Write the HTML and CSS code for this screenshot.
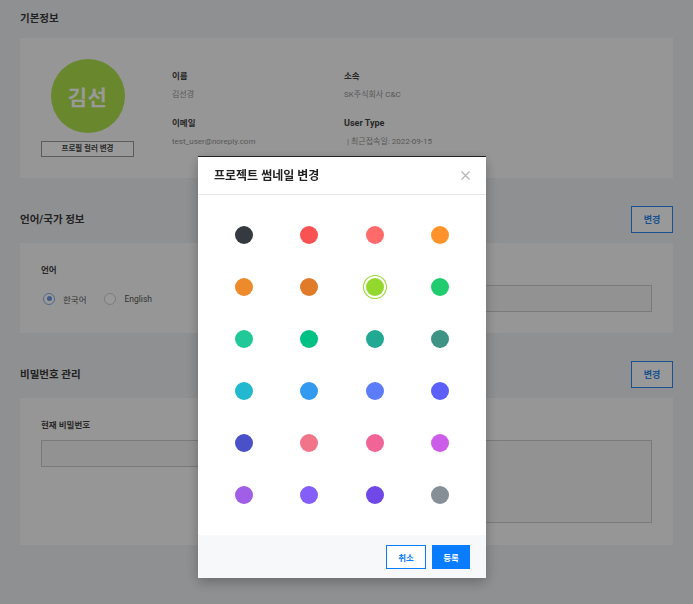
FILE: index.html
```html
<!DOCTYPE html>
<html lang="ko">
<head>
<meta charset="utf-8">
<title>프로필</title>
<link rel="stylesheet" href="styles.css">
</head>
<body>
<main class="page">
  <section class="section">
    <div class="sec-head first">
      <h2 class="sec-title">기본정보</h2>
    </div>
    <div class="card profile">
      <div class="avatar-col">
        <div class="avatar">김선</div>
        <button class="ghost-btn" type="button">프로필 컬러 변경</button>
      </div>
      <dl class="info">
        <div class="info-item">
          <dt class="label">이름</dt>
          <dd class="value">김선경</dd>
        </div>
        <div class="info-item">
          <dt class="label">소속</dt>
          <dd class="value">SK주식회사 C&amp;C</dd>
        </div>
        <div class="info-item">
          <dt class="label">이메일</dt>
          <dd class="value">test_user@noreply.com</dd>
        </div>
        <div class="info-item">
          <dt class="label latin">User Type</dt>
          <dd class="value indent">| 최근접속일: 2022-09-15</dd>
        </div>
      </dl>
    </div>
  </section>

  <section class="section">
    <div class="sec-head">
      <h2 class="sec-title">언어/국가 정보</h2>
      <button class="line-btn" type="button">변경</button>
    </div>
    <div class="card two-col">
      <div class="field">
        <div class="label">언어</div>
        <div class="radios">
          <label class="radio"><span class="radio-mark on"></span>한국어</label>
          <label class="radio"><span class="radio-mark"></span>English</label>
        </div>
      </div>
      <div class="field">
        <div class="label">국가</div>
        <div class="input"></div>
      </div>
    </div>
  </section>

  <section class="section">
    <div class="sec-head">
      <h2 class="sec-title">비밀번호 관리</h2>
      <button class="line-btn" type="button">변경</button>
    </div>
    <div class="card two-col pw">
      <div class="field">
        <div class="label">현재 비밀번호</div>
        <div class="input"></div>
      </div>
      <div class="field">
        <div class="label">새 비밀번호</div>
        <div class="input tall"></div>
      </div>
    </div>
  </section>
</main>

<div class="overlay"></div>

<div class="modal" role="dialog" aria-label="프로젝트 썸네일 변경">
  <div class="modal-head">
    <h3 class="modal-title">프로젝트 썸네일 변경</h3>
    <button class="close" type="button" aria-label="닫기">
      <svg width="9" height="9" viewBox="0 0 9 9"><path d="M0.5 0.5 L8.5 8.5 M8.5 0.5 L0.5 8.5" stroke="#b3b3b3" stroke-width="1.1" fill="none"/></svg>
    </button>
  </div>
  <div class="modal-body">
    <div class="swatches">
      <span class="cell"><span class="dot c1"></span></span>
      <span class="cell"><span class="dot c2"></span></span>
      <span class="cell"><span class="dot c3"></span></span>
      <span class="cell"><span class="dot c4"></span></span>
      <span class="cell"><span class="dot c5"></span></span>
      <span class="cell"><span class="dot c6"></span></span>
      <span class="cell"><span class="dot c7 selected"></span></span>
      <span class="cell"><span class="dot c8"></span></span>
      <span class="cell"><span class="dot c9"></span></span>
      <span class="cell"><span class="dot c10"></span></span>
      <span class="cell"><span class="dot c11"></span></span>
      <span class="cell"><span class="dot c12"></span></span>
      <span class="cell"><span class="dot c13"></span></span>
      <span class="cell"><span class="dot c14"></span></span>
      <span class="cell"><span class="dot c15"></span></span>
      <span class="cell"><span class="dot c16"></span></span>
      <span class="cell"><span class="dot c17"></span></span>
      <span class="cell"><span class="dot c18"></span></span>
      <span class="cell"><span class="dot c19"></span></span>
      <span class="cell"><span class="dot c20"></span></span>
      <span class="cell"><span class="dot c21"></span></span>
      <span class="cell"><span class="dot c22"></span></span>
      <span class="cell"><span class="dot c23"></span></span>
      <span class="cell"><span class="dot c24"></span></span>
    </div>
  </div>
  <div class="modal-foot">
    <button class="btn-outline" type="button">취소</button>
    <button class="btn-primary" type="button">등록</button>
  </div>
</div>
</body>
</html>
```

FILE: styles.css
```css
* { box-sizing: border-box; }

html, body {
  margin: 0;
  padding: 0;
}

body {
  background: #eef0f3;
  font-family: Roboto, "Noto Sans CJK KR", sans-serif;
  color: #444;
  width: 693px;
  height: 604px;
  overflow: hidden;
}

button {
  font-family: inherit;
  cursor: pointer;
  padding: 0;
}

.page {
  padding: 0 20px;
}

/* section headers */
.sec-head {
  display: flex;
  align-items: center;
  justify-content: space-between;
  min-height: 27px;
  padding-top: 28px;
  margin-bottom: 10px;
  box-sizing: content-box;
}

.sec-head.first {
  padding-top: 5px;
  margin-bottom: 6px;
}

.sec-title {
  margin: 0;
  font-size: 10.5px;
  font-weight: 700;
  color: #3a3a3a;
  line-height: 14px;
}

.line-btn {
  width: 42px;
  height: 27px;
  border: 1px solid #2b88f0;
  background: #fff;
  color: #2b88f0;
  font-size: 9px;
  font-weight: 700;
}

/* cards */
.card {
  background: #fbfbfb;
}

.profile {
  display: flex;
  padding: 21px;
  gap: 38px;
}

.avatar-col {
  display: flex;
  flex-direction: column;
  align-items: center;
  gap: 8px;
  width: 93px;
}

.avatar {
  width: 74px;
  height: 74px;
  border-radius: 50%;
  background: #b0e24c;
  color: #fff;
  font-size: 21px;
  font-weight: 700;
  display: flex;
  align-items: center;
  justify-content: center;
  letter-spacing: 0.5px;
}

.ghost-btn {
  width: 93px;
  height: 16px;
  border: 1px solid #9a9a9a;
  background: #fff;
  color: #444;
  font-size: 7.5px;
  font-weight: 700;
  line-height: 14px;
}

.info {
  margin: 10px 0 0;
  display: grid;
  grid-template-columns: 172px 172px;
  row-gap: 14px;
  align-content: start;
}

.info-item {
  display: flex;
  flex-direction: column;
  gap: 5px;
}

.label {
  font-size: 8.5px;
  font-weight: 700;
  color: #444;
  line-height: 14px;
  margin: 0;
}

.label.latin {
  font-size: 9px;
}

.value {
  margin: 0;
  font-size: 8px;
  color: #939393;
  line-height: 14px;
}

.value.indent {
  padding-left: 3px;
}

/* two column form cards */
.two-col {
  display: grid;
  grid-template-columns: 1fr 1fr;
  column-gap: 20px;
  padding: 20px 21px 21px;
}

.two-col.pw {
  padding-bottom: 22px;
}

.field {
  display: flex;
  flex-direction: column;
  gap: 8px;
}

.input {
  height: 27px;
  border: 1px solid #ccc;
  background: #f4f4f4;
}

.input.tall {
  height: 83px;
}

.radios {
  height: 27px;
  display: flex;
  align-items: center;
  gap: 18px;
  padding-left: 2px;
}

.radio {
  display: flex;
  align-items: center;
  gap: 8px;
  font-size: 8.5px;
  color: #555;
}

.radio-mark {
  width: 12px;
  height: 12px;
  border-radius: 50%;
  border: 1px solid #d0d0d0;
  background: #fff;
  display: inline-flex;
  align-items: center;
  justify-content: center;
}

.radio-mark.on {
  border-color: #86aee8;
}

.radio-mark.on::after {
  content: "";
  width: 5px;
  height: 5px;
  border-radius: 50%;
  background: #6a98e0;
}

/* overlay + modal */
.overlay {
  position: fixed;
  inset: 0;
  background: rgba(0, 0, 0, 0.4);
}

.modal {
  position: fixed;
  top: 156px;
  left: 198px;
  width: 288px;
  height: 422px;
  background: #fff;
  border-top: 1px solid #222;
  box-shadow: 0 4px 12px rgba(0, 0, 0, 0.28);
  display: flex;
  flex-direction: column;
}

.modal-head {
  height: 38px;
  display: flex;
  align-items: center;
  justify-content: space-between;
  padding: 0 16px;
  border-bottom: 1px solid #e6e6e6;
  box-sizing: content-box;
}

.modal-title {
  margin: 0;
  font-size: 12px;
  font-weight: 700;
  color: #222;
  line-height: 16px;
}

.close {
  border: 0;
  background: none;
  width: 9px;
  height: 9px;
  display: flex;
}

.modal-body {
  flex: 1;
  padding: 14px 13px;
}

.swatches {
  display: grid;
  grid-template-columns: repeat(4, 1fr);
  grid-auto-rows: 52px;
}

.cell {
  display: flex;
  align-items: center;
  justify-content: center;
}

.dot {
  width: 18px;
  height: 18px;
  border-radius: 50%;
}

.dot.selected {
  box-shadow: 0 0 0 2px #fff, 0 0 0 3px #94d82d;
}

.c1 { background: #343a40; }
.c2 { background: #fa5252; }
.c3 { background: #ff6b6b; }
.c4 { background: #ff922b; }
.c5 { background: #ed8a2b; }
.c6 { background: #e07b2a; }
.c7 { background: #94d82d; }
.c8 { background: #20cc6f; }
.c9 { background: #20c997; }
.c10 { background: #00c084; }
.c11 { background: #22a993; }
.c12 { background: #3d9485; }
.c13 { background: #22b8cf; }
.c14 { background: #339af0; }
.c15 { background: #5c7cfa; }
.c16 { background: #5c60f8; }
.c17 { background: #4a50c8; }
.c18 { background: #f27489; }
.c19 { background: #f06595; }
.c20 { background: #cc5de8; }
.c21 { background: #a05fe6; }
.c22 { background: #845ef7; }
.c23 { background: #7048e8; }
.c24 { background: #868e96; }

.modal-foot {
  height: 44px;
  background: #f7f8fa;
  display: flex;
  align-items: center;
  justify-content: flex-end;
  gap: 6px;
  padding: 0 16px;
}

.btn-outline,
.btn-primary {
  height: 24px;
  font-size: 8.5px;
  font-weight: 700;
}

.btn-outline {
  width: 40px;
  border: 1px solid #0a7cff;
  background: #fff;
  color: #0a7cff;
}

.btn-primary {
  width: 38px;
  border: 1px solid #0a7cff;
  background: #0a7cff;
  color: #fff;
}
```
